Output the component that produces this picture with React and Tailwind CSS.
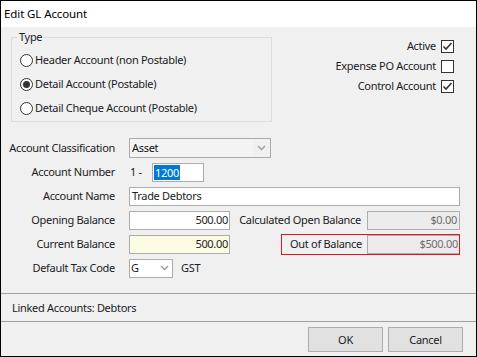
import React from "react";

const Chevron = () => (
  <svg width="9" height="6" viewBox="0 0 9 6" className="block">
    <path d="M1 1 L4.5 4.5 L8 1" fill="none" stroke="#9c9c9c" strokeWidth="1.4" />
  </svg>
);

const Radio = ({ checked, label }) => (
  <div className="h-[24px] flex items-center">
    <div className="w-[13px] h-[13px] rounded-full border border-[#333] bg-white flex items-center justify-center shrink-0">
      {checked && <div className="w-[7px] h-[7px] rounded-full bg-[#333]" />}
    </div>
    <span className="ml-[2px]">{label}</span>
  </div>
);

const Check = ({ checked, label }) => (
  <div className="h-[20px] flex items-center gap-[5px]">
    <span>{label}</span>
    <div className="w-[13px] h-[13px] border border-[#333] bg-white flex items-center justify-center">
      {checked && (
        <svg width="11" height="11" viewBox="0 0 11 11" className="block">
          <path d="M1.5 5.5 L4 8 L9.5 2" fill="none" stroke="#333" strokeWidth="1.6" />
        </svg>
      )}
    </div>
  </div>
);

const Label = ({ children }) => <div className="w-[114px] text-right shrink-0">{children}</div>;

export default function App() {
  return (
    <div className="w-[477px] h-[357px] border border-black bg-[#f0f0f0] flex flex-col font-['Noto_Sans',sans-serif] text-[11px] tracking-[-0.3px] leading-[16px] text-[#1b1b24] whitespace-nowrap overflow-hidden">
      <div className="h-[26px] bg-white flex items-center pl-[3px] text-black text-[11.5px] tracking-[-0.1px] shrink-0">Edit GL Account</div>

      <div className="flex shrink-0">
        <div className="relative ml-[10px] mt-[10px] w-[261px] h-[85px] border border-[#dcdcdc] pt-[10px] pl-[8px]">
          <span className="absolute left-[6px] top-[-9px] px-[1px] bg-[#f0f0f0] leading-[16px]">Type</span>
          <Radio label="Header Account (non Postable)" />
          <Radio checked label="Detail Account (Postable)" />
          <Radio label="Detail Cheque Account (Postable)" />
        </div>
        <div className="ml-auto mr-[22px] mt-[9px] flex flex-col items-end">
          <Check checked label="Active" />
          <Check label="Expense PO Account" />
          <Check checked label="Control Account" />
        </div>
      </div>

      <div className="mt-[14px] flex flex-col shrink-0">
        <div className="h-[24px] flex items-center pr-[16px]">
          <Label>Account Classification</Label>
          <div className="ml-[14px] w-[142px] h-[20px] border border-[#acacac] bg-[#f3f3f3] flex items-center">
            <span className="pl-[2px] flex-1 text-[#111]">Asset</span>
            <div className="w-[17px] h-full flex items-center justify-center bg-[#f0f0f0]">
              <Chevron />
            </div>
          </div>
        </div>

        <div className="h-[24px] flex items-center pr-[16px]">
          <Label>Account Number</Label>
          <span className="ml-[15px] w-[22px]">1 -</span>
          <div className="w-[52px] h-[19px] border border-[#acacac] bg-white flex items-center pl-[1px]">
            <span className="bg-[#0078d7] text-white px-[1px] leading-[15px]">1200</span>
          </div>
        </div>

        <div className="h-[24px] flex items-center pr-[16px]">
          <Label>Account Name</Label>
          <div className="ml-[14px] flex-1 h-[19px] border border-[#acacac] bg-white flex items-center pl-[2px]">Trade Debtors</div>
        </div>

        <div className="h-[24px] flex items-center pr-[16px]">
          <Label>Opening Balance</Label>
          <div className="ml-[14px] w-[101px] h-[19px] border border-[#acacac] bg-white flex items-center justify-end pr-[1px]">500.00</div>
          <div className="ml-auto flex items-center">
            <span>Calculated Open Balance</span>
            <div className="ml-[6px] w-[93px] h-[19px] border border-[#adadad] bg-[#ececec] flex items-center justify-end pr-[2px] text-[#6d6d6d]">$0.00</div>
          </div>
        </div>

        <div className="h-[24px] flex items-center pr-[16px]">
          <Label>Current Balance</Label>
          <div className="ml-[14px] w-[101px] h-[19px] border border-[#acacac] bg-[#fcfce4] flex items-center justify-end pr-[1px]">500.00</div>
          <div className="ml-auto w-[179px] h-[21px] border border-[#e81123] flex items-center justify-end">
            <span>Out of Balance</span>
            <div className="ml-[5px] w-[92px] h-[19px] border-l border-y border-[#adadad] bg-[#ececec] flex items-center justify-end pr-[1px] text-[#6d6d6d]">$500.00</div>
          </div>
        </div>

        <div className="h-[24px] flex items-center pr-[16px]">
          <Label>Default Tax Code</Label>
          <div className="ml-[14px] w-[44px] h-[19px] border border-[#acacac] bg-white flex items-center">
            <span className="pl-[1px] flex-1">G</span>
            <div className="w-[16px] flex items-center justify-center">
              <Chevron />
            </div>
          </div>
          <span className="ml-[8px]">GST</span>
        </div>
      </div>

      <div className="mt-[13px] h-px bg-[#a0a0a0] shrink-0" />
      <div className="h-[27px] flex items-center pl-[11px] shrink-0">Linked Accounts: Debtors</div>
      <div className="h-px bg-[#a0a0a0] shrink-0" />
      <div className="flex justify-end gap-[5px] pr-[13px] pt-[5px]">
        <div className="w-[75px] h-[25px] border border-[#adadad] bg-[#e1e1e1] flex items-center justify-center">OK</div>
        <div className="w-[75px] h-[25px] border border-[#adadad] bg-[#e1e1e1] flex items-center justify-center">Cancel</div>
      </div>
    </div>
  );
}
